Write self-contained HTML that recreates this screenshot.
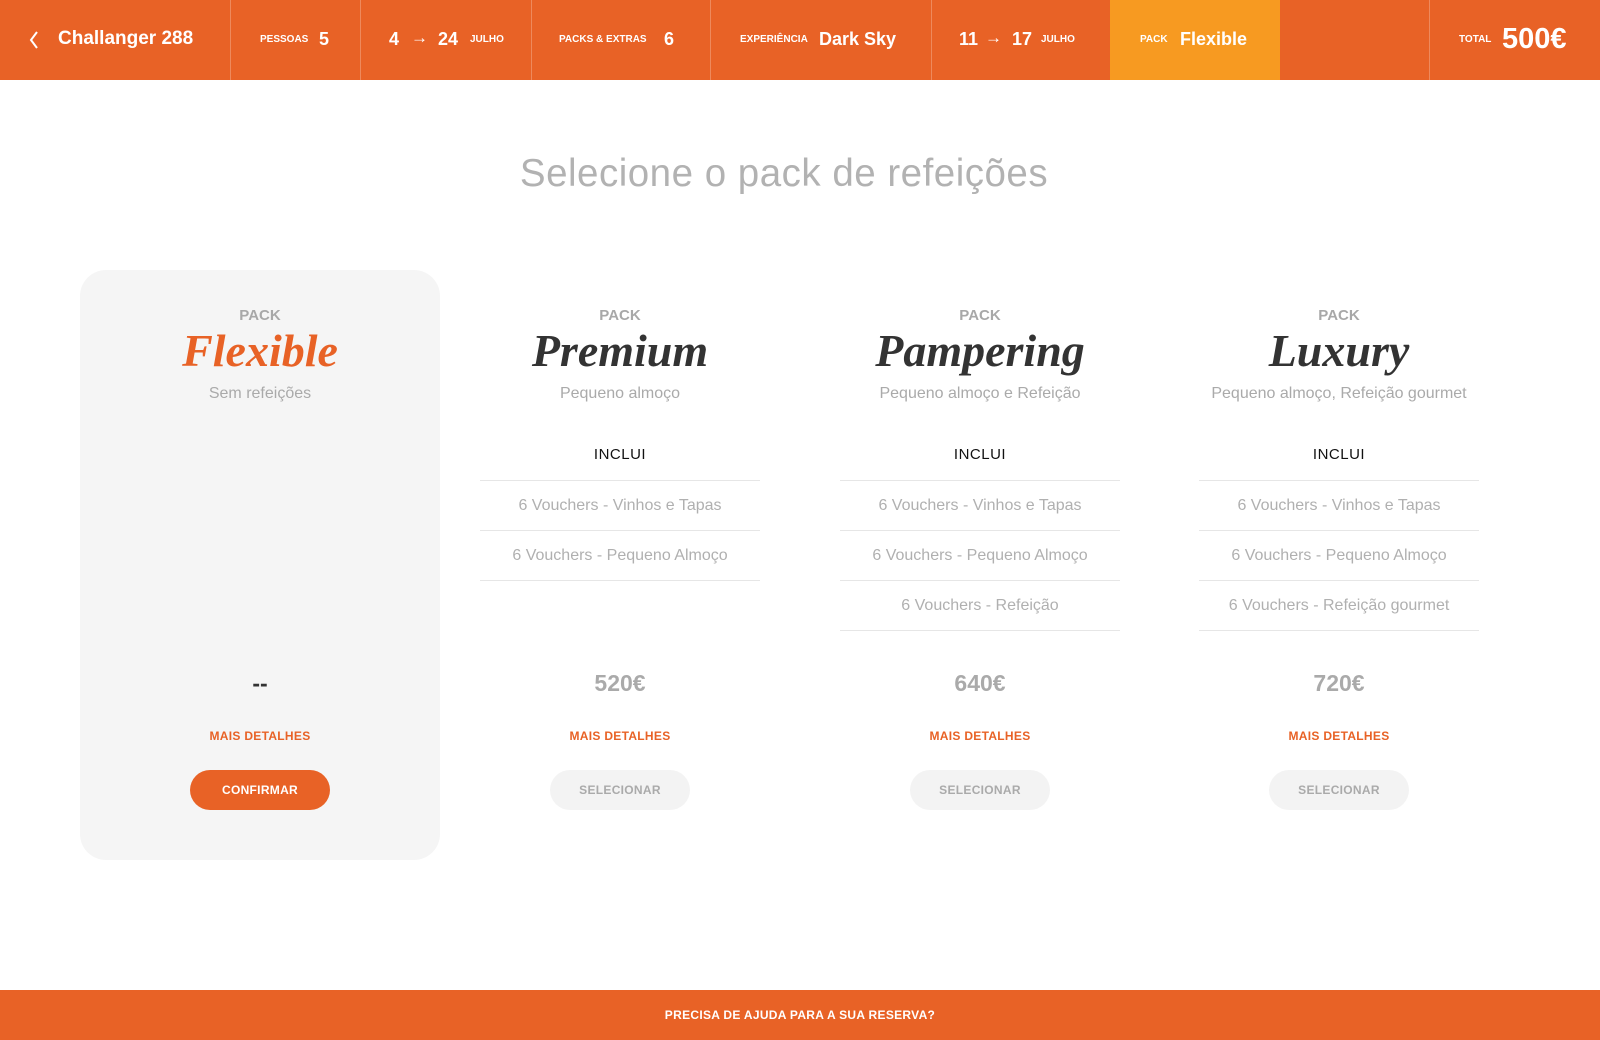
<!DOCTYPE html>
<html><head><meta charset="utf-8"><style>
*{margin:0;padding:0;box-sizing:border-box}
body{width:1600px;height:1040px;background:#fff;position:relative;overflow:hidden;font-family:"Liberation Sans",sans-serif}
.hdr{position:absolute;left:0;top:0;width:1600px;height:80px;background:#e86226}
.act{position:absolute;left:1110px;top:0;width:170px;height:80px;background:#f79a21}
.dv{position:absolute;top:0;width:1px;height:80px;background:rgba(255,255,255,.25)}
.t{position:absolute;color:#fff;font-weight:bold;white-space:nowrap}
.s{font-size:10px;top:34px}
.b{font-size:18px;top:29px}
.title{position:absolute;top:152px;left:0;width:1568px;text-align:center;font-size:38.5px;color:#b2b2b2;font-weight:normal;letter-spacing:.5px}
.card{position:absolute;top:270px;width:360px;height:590px}
.card.sel{background:#f5f5f5;border-radius:26px}
.c{position:absolute;left:0;width:360px;text-align:center}
.pk{top:37px;font-size:15px;font-weight:bold;color:#a8a8a8}
.nm{top:54px;font-family:"Liberation Serif",serif;font-style:italic;font-weight:bold;font-size:46px;color:#333}
.sub{top:115px;font-size:16px;color:#aaa}
.inc{top:176px;font-size:15px;color:#111;letter-spacing:.5px}
.items{position:absolute;left:40px;top:210px;width:280px;border-top:1px solid #e6e6e6}
.items div{height:50px;line-height:49px;border-bottom:1px solid #e6e6e6;text-align:center;color:#b0b0b0;font-size:16px}
.pr{top:400px;font-size:23px;font-weight:bold;color:#aaa}
.md{top:459px;font-size:12px;font-weight:bold;color:#e86226;letter-spacing:.3px}
.btn{position:absolute;left:110px;top:500px;width:140px;height:40px;border-radius:20px;background:#f3f3f3;color:#aaa;font-size:12px;font-weight:bold;text-align:center;line-height:40px;letter-spacing:.3px}
.btn.on{background:#e86226;color:#fff}
.ftr{position:absolute;left:0;top:990px;width:1600px;height:50px;background:#e86226;color:#fff;font-size:12px;font-weight:bold;text-align:center;line-height:50px;letter-spacing:.3px}
</style></head><body>
<div class="hdr">
<div class="act"></div>
<div class="dv" style="left:230px"></div><div class="dv" style="left:360px"></div><div class="dv" style="left:531px"></div><div class="dv" style="left:710px"></div><div class="dv" style="left:931px"></div><div class="dv" style="left:1429px"></div>
<svg class="t" style="left:28px;top:30px" width="12" height="20" viewBox="0 0 12 20"><path d="M9 2 L3 10 L9 18" stroke="#fff" stroke-width="2" fill="none"/></svg>
<span class="t" style="left:58px;top:28px;font-size:19px">Challanger 288</span>
<span class="t s" style="left:260px">PESSOAS</span><span class="t b" style="left:319px">5</span>
<span class="t b" style="left:389px">4</span><span class="t" style="left:411px;top:28px;font-size:17px;font-weight:normal">→</span><span class="t b" style="left:438px">24</span><span class="t s" style="left:470px">JULHO</span>
<span class="t s" style="left:559px">PACKS &amp; EXTRAS</span><span class="t b" style="left:664px">6</span>
<span class="t s" style="left:740px">EXPERIÊNCIA</span><span class="t b" style="left:819px">Dark Sky</span>
<span class="t b" style="left:959px">11</span><span class="t" style="left:985px;top:28px;font-size:17px;font-weight:normal">→</span><span class="t b" style="left:1012px">17</span><span class="t s" style="left:1041px">JULHO</span>
<span class="t s" style="left:1140px">PACK</span><span class="t b" style="left:1180px">Flexible</span>
<span class="t s" style="left:1459px">TOTAL</span><span class="t" style="left:1502px;top:23px;font-size:29px">500€</span>
</div>
<div class="title">Selecione o pack de refeições</div>

<div class="card sel" style="left:80px">
<div class="c pk">PACK</div><div class="c nm" style="color:#e86226">Flexible</div><div class="c sub">Sem refeições</div>
<div class="c pr" style="color:#333">--</div><div class="c md">MAIS DETALHES</div><div class="btn on">CONFIRMAR</div>
</div>
<div class="card" style="left:440px">
<div class="c pk">PACK</div><div class="c nm">Premium</div><div class="c sub">Pequeno almoço</div><div class="c inc">INCLUI</div>
<div class="items"><div>6 Vouchers - Vinhos e Tapas</div><div>6 Vouchers - Pequeno Almoço</div></div>
<div class="c pr">520€</div><div class="c md">MAIS DETALHES</div><div class="btn">SELECIONAR</div>
</div>
<div class="card" style="left:800px">
<div class="c pk">PACK</div><div class="c nm">Pampering</div><div class="c sub">Pequeno almoço e Refeição</div><div class="c inc">INCLUI</div>
<div class="items"><div>6 Vouchers - Vinhos e Tapas</div><div>6 Vouchers - Pequeno Almoço</div><div>6 Vouchers - Refeição</div></div>
<div class="c pr">640€</div><div class="c md">MAIS DETALHES</div><div class="btn">SELECIONAR</div>
</div>
<div class="card" style="left:1159px">
<div class="c pk">PACK</div><div class="c nm">Luxury</div><div class="c sub">Pequeno almoço, Refeição gourmet</div><div class="c inc">INCLUI</div>
<div class="items"><div>6 Vouchers - Vinhos e Tapas</div><div>6 Vouchers - Pequeno Almoço</div><div>6 Vouchers - Refeição gourmet</div></div>
<div class="c pr">720€</div><div class="c md">MAIS DETALHES</div><div class="btn">SELECIONAR</div>
</div>
<div class="ftr">PRECISA DE AJUDA PARA A SUA RESERVA?</div>
</body></html>
